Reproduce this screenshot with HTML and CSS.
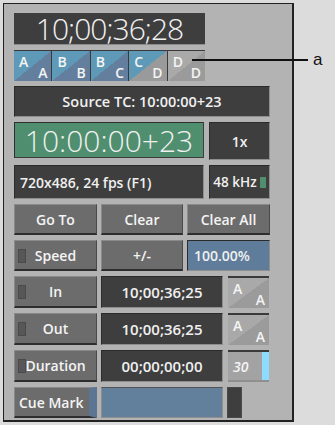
FILE: index.html
```html
<!DOCTYPE html>
<html lang="en">
<head>
    <meta charset="UTF-8">
    <title>Timecode Window</title>
    <link rel="stylesheet" href="styles.css">
</head>
<body>
    <div class="panel">
        <div class="tc-main">10;00;36;28</div>

        <div class="tracks">
            <div class="trk"><span class="hi">A</span><span class="lo">A</span></div>
            <div class="trk"><span class="hi">B</span><span class="lo">B</span></div>
            <div class="trk"><span class="hi">B</span><span class="lo">C</span></div>
            <div class="trk half"><span class="hi">C</span><span class="lo">D</span></div>
            <div class="trk off"><span class="hi">D</span><span class="lo">D</span></div>
        </div>

        <div class="box src">Source TC: 10:00:00+23</div>

        <div class="row r-wide">
            <div class="box green">10:00:00+23</div>
            <div class="box small">1x</div>
        </div>

        <div class="row r-wide">
            <div class="box fmt">720x486, 24 fps (F1)</div>
            <div class="box small khz">48 kHz <i class="led"></i></div>
        </div>

        <div class="row r-three">
            <div class="btn">Go To</div>
            <div class="btn">Clear</div>
            <div class="btn">Clear All</div>
        </div>

        <div class="row r-three">
            <div class="btn lamp">Speed</div>
            <div class="btn">+/-</div>
            <div class="box blue">100.00%</div>
        </div>

        <div class="row r-tc">
            <div class="btn lamp">In</div>
            <div class="box tc">10;00;36;25</div>
            <div class="trk off sel"><span class="hi">A</span><span class="lo">A</span></div>
        </div>

        <div class="row r-tc">
            <div class="btn lamp">Out</div>
            <div class="box tc">10;00;36;25</div>
            <div class="trk off sel"><span class="hi">A</span><span class="lo">A</span></div>
        </div>

        <div class="row r-tc">
            <div class="btn lamp">Duration</div>
            <div class="box tc">00;00;00;00</div>
            <div class="fps"><span>30</span><i class="bar"></i></div>
        </div>

        <div class="row r-cue">
            <div class="btn cue">Cue Mark</div>
            <div class="cue-field"></div>
            <div class="cue-end"></div>
        </div>
    </div>

    <div class="callout">
        <span class="line"></span>
        <span class="tag">a</span>
    </div>
</body>
</html>
```

FILE: styles.css
```css
body {
    margin: 0;
    background: #dcdcdc;
    font-family: "Open Sans", sans-serif;
    width: 335px;
    height: 425px;
    position: relative;
    overflow: hidden;
}
.panel {
    position: absolute;
    left: 3px;
    top: 3px;
    width: 267px;
    height: 407px;
    background: #b3b3b3;
    border: 1px solid #222;
    border-right-width: 2px;
    border-bottom-width: 2px;
    padding: 9px 11px 0 10px;
    display: flex;
    flex-direction: column;
    gap: 5px;
}
.tc-main {
    width: 191px;
    height: 32px;
    background: #3e3e3e;
    border-bottom: 1px solid #8c8c8c;
    box-sizing: border-box;
    color: #f2f2f2;
    font-weight: 300;
    font-size: 30px;
    line-height: 31px;
    letter-spacing: -1px;
    text-align: center;
}
.tracks {
    width: 191px;
    height: 31px;
    display: flex;
    gap: 1px;
    background: #3a3a3a;
    padding-top: 1px;
    box-sizing: border-box;
}
.trk {
    position: relative;
    flex: 1;
    background: linear-gradient(to bottom right, #5e9ab7 50%, #637f9d 50%);
    color: #f4f4f4;
    font-weight: 600;
    font-size: 14px;
}
.trk.half {
    background: linear-gradient(to bottom right, #5e9ab7 50%, #9a9a9a 50%);
}
.trk.off {
    background: linear-gradient(to bottom right, #a9a9a9 50%, #9b9b9b 50%);
}
.trk .hi {
    position: absolute;
    left: 5px;
    top: 1px;
}
.trk .lo {
    position: absolute;
    right: 4px;
    bottom: -1px;
}
.row {
    display: grid;
    width: 256px;
}
.r-wide {
    grid-template-columns: 190px 61px;
    column-gap: 5px;
}
.r-three {
    grid-template-columns: 83px 82px 83px;
    column-gap: 4px;
    height: 31px;
}
.r-tc {
    grid-template-columns: 83px 122px 42px;
    column-gap: 4px;
    height: 32px;
}
.r-tc > .trk, .r-tc > .fps {
    margin-left: 1px;
}
.r-cue {
    grid-template-columns: 83px 122px 15px;
    column-gap: 4px;
    height: 31px;
}
.box {
    background: #3e3e3e;
    border: 1px solid #2b2b2b;
    border-bottom-color: #8e8e8e;
    border-right-color: #8e8e8e;
    color: #f0f0f0;
    font-size: 14px;
    font-weight: 600;
    display: flex;
    align-items: center;
    justify-content: center;
}
.src {
    width: 256px;
    height: 31px;
    box-sizing: border-box;
    font-size: 14.5px;
}
.green {
    height: 34px;
    background: #4f8e6e;
    border-color: #2f2f2f #3e3e3e #3e3e3e #2f2f2f;
    font-size: 30px;
    font-weight: 300;
}
.r-wide:nth-of-type(4) .small {
    height: 36px;
}
.fmt {
    height: 32px;
    justify-content: flex-start;
    padding-left: 5px;
}
.khz {
    gap: 3px;
    font-size: 13.5px;
}
.led {
    display: inline-block;
    width: 6px;
    height: 11px;
    background: #4f8e6e;
}
.btn {
    position: relative;
    background: #6c6c6c;
    border-top: 1px solid #8a8a8a;
    border-left: 1px solid #8a8a8a;
    border-right: 1px solid #4a4a4a;
    border-bottom: 2px solid #2e2e2e;
    color: #f4f4f4;
    font-size: 14px;
    font-weight: 600;
    display: flex;
    align-items: center;
    justify-content: center;
}
.lamp::before {
    content: "";
    position: absolute;
    left: 3px;
    top: 8px;
    width: 6px;
    height: 12px;
    background: #575757;
    border: 1px solid #4a4a4a;
}
.blue {
    background: #5f7d9a;
    justify-content: flex-start;
    padding-left: 6px;
    font-size: 14px;
}
.tc {
    font-size: 15px;
}
.sel {
    border-top: 2px solid #3a3a3a;
}
.fps {
    position: relative;
    background: #a3a3a3;
    border-top: 2px solid #3a3a3a;
    border-bottom: 2px solid #8f8f8f;
    color: #f4f4f4;
    font-size: 14px;
    font-weight: 600;
    font-style: italic;
    display: flex;
    align-items: center;
    padding-left: 5px;
}
.fps .bar {
    position: absolute;
    right: 0;
    top: 0;
    bottom: 0;
    width: 7px;
    background: #8ddcff;
}
.cue {
    border-right: 8px solid #5c7593;
    justify-content: flex-start;
    padding-left: 4px;
}
.cue-field {
    background: #62809c;
    border: 1px solid #8e8e8e;
    border-top-color: #535353;
}
.cue-end {
    background: #3e3e3e;
    border: 1px solid #4a4a4a;
}
.callout {
    position: absolute;
    left: 192px;
    top: 50px;
    display: flex;
    align-items: center;
    gap: 5px;
}
.callout .line {
    display: block;
    width: 116px;
    height: 2px;
    background: #111;
}
.callout .tag {
    font-family: "Liberation Sans", sans-serif;
    font-size: 17px;
    color: #111;
    line-height: 20px;
}
```
